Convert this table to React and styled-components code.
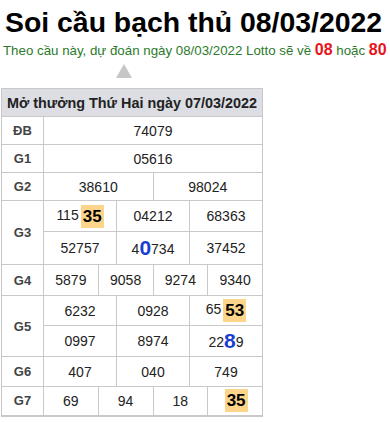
import styled, { createGlobalStyle } from "styled-components"

const GlobalStyle = createGlobalStyle`
  body {
    margin: 0;
    background: #fff;
    font-family: "Liberation Sans", Arial, sans-serif;
  }
`

const Page = styled.div`
  padding: 5px 3px 0 3px;
  width: 390px;
  box-sizing: border-box;
`

const Title = styled.h1`
  margin: 0 0 0 2px;
  font-size: 28.4px;
  font-weight: 700;
  color: #000;
  line-height: 34px;
`

const Lead = styled.div`
  margin-top: 2px;
  font-size: 13.3px;
  color: #2b7a2b;
  line-height: 18px;
  white-space: nowrap;
`

const Hot = styled.b`
  color: #e8141b;
  font-size: 16px;
`

const Arrow = styled.div`
  width: 0;
  height: 0;
  margin: 4px 0 10px 113px;
  border-left: 8px solid transparent;
  border-right: 8px solid transparent;
  border-bottom: 14px solid #c6c6c6;
`

const Table = styled.table`
  width: 262px;
  margin-left: -2px;
  border-collapse: collapse;
  table-layout: fixed;
  border: 1px solid #c9c9c9;
  border-bottom-width: 2px;
`

const Row = styled.tr`
  height: ${(p) => p.$h}px;
`

const Head = styled.th`
  background: #dcdee4;
  padding: 0;
  font-size: 14.4px;
  font-weight: 700;
  color: #222;
  border: 1px solid #c9c9c9;
`

const Label = styled.td`
  text-align: center;
  font-size: 13px;
  font-weight: 700;
  color: #444;
  border: 1px solid #c9c9c9;
  padding: 0;
`

const Cell = styled.td`
  text-align: center;
  font-size: 14px;
  color: #222;
  border: 1px solid #c9c9c9;
  padding: 0;
`

const Mark = styled.b`
  display: inline-block;
  background: #fdd58a;
  color: #000;
  font-size: 17px;
  line-height: 22px;
  padding: 1px 2px 0;
  margin-left: 2px;
  vertical-align: middle;
`

const Blue = styled.b`
  color: #1b3fd2;
  font-size: 21px;
  vertical-align: -1px;
`

const rows = [
  { label: "ĐB", h: [28], lines: [["74079"]] },
  { label: "G1", h: [28], lines: [["05616"]] },
  { label: "G2", h: [28], lines: [["38610", "98024"]] },
  {
    label: "G3",
    h: [31, 33],
    lines: [
      [<>115<Mark>35</Mark></>, "04212", "68363"],
      ["52757", <>4<Blue>0</Blue>734</>, "37452"],
    ],
  },
  { label: "G4", h: [31], lines: [["5879", "9058", "9274", "9340"]] },
  {
    label: "G5",
    h: [30, 31],
    lines: [
      ["6232", "0928", <>65<Mark>53</Mark></>],
      ["0997", "8974", <>22<Blue>8</Blue>9</>],
    ],
  },
  { label: "G6", h: [30], lines: [["407", "040", "749"]] },
  { label: "G7", h: [29], lines: [["69", "94", "18", <Mark>35</Mark>]] },
]

export default function App() {
  return (
    <Page>
      <GlobalStyle />
      <Title>Soi cầu bạch thủ 08/03/2022</Title>
      <Lead>
        Theo cầu này, dự đoán ngày 08/03/2022 Lotto sẽ về <Hot>08</Hot> hoặc <Hot>80</Hot>
      </Lead>
      <Arrow />
      <Table>
        <colgroup>
          <col style={{ width: 42 }} />
          {Array.from({ length: 12 }).map((_, i) => (
            <col key={i} />
          ))}
        </colgroup>
        <thead>
          <Row $h={28}>
            <Head colSpan={13}>Mở thưởng Thứ Hai ngày 07/03/2022</Head>
          </Row>
        </thead>
        <tbody>
          {rows.map((r) =>
            r.lines.map((line, li) => (
              <Row key={r.label + li} $h={r.h[li]}>
                {li === 0 && <Label rowSpan={r.lines.length}>{r.label}</Label>}
                {line.map((v, ci) => (
                  <Cell key={ci} colSpan={12 / line.length}>
                    {v}
                  </Cell>
                ))}
              </Row>
            ))
          )}
        </tbody>
      </Table>
    </Page>
  )
}
